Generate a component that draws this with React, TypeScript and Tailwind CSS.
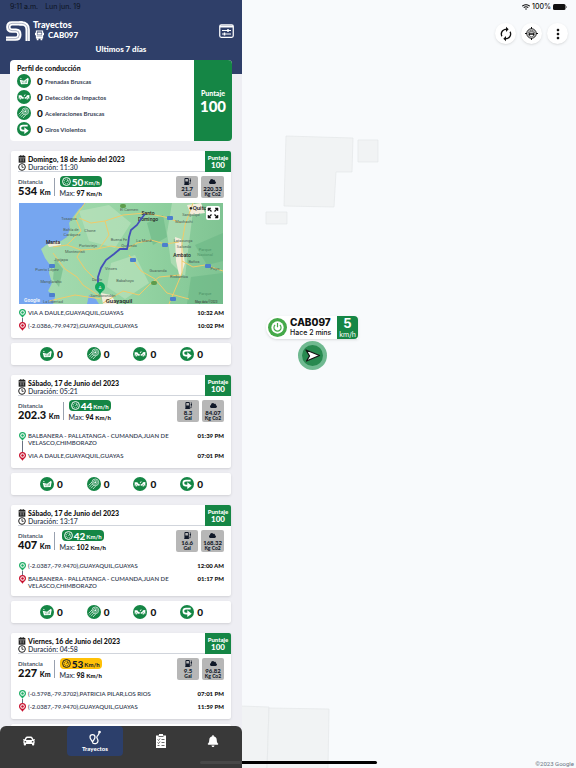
import { BsFuelPumpFill } from "react-icons/bs";
import { FaBell, FaCar, FaCloud, FaWifi } from "react-icons/fa";
import { MdAutorenew, MdMoreVert } from "react-icons/md";

type Stop = {
  place: string;
  time: string;
};

type Trip = {
  id: number;
  date: string;
  duration: string;
  distance: string;
  speed: string;
  max: string;
  warning?: boolean;
  fuel: string;
  co2: string;
  map?: boolean;
  stops: Stop[];
};

type EventKind = "brake" | "impact" | "accel" | "turn";

const trips: Trip[] = [
  {
    id: 1,
    date: "Domingo, 18 de Junio del 2023",
    duration: "11:30",
    distance: "534",
    speed: "50",
    max: "97",
    fuel: "21.7",
    co2: "220.33",
    map: true,
    stops: [
      { place: "VIA A DAULE,GUAYAQUIL,GUAYAS", time: "10:32 AM" },
      { place: "(-2.0386,-79.9472),GUAYAQUIL,GUAYAS", time: "10:02 PM" },
    ],
  },
  {
    id: 2,
    date: "Sábado, 17 de Junio del 2023",
    duration: "05:21",
    distance: "202.3",
    speed: "44",
    max: "94",
    fuel: "8.3",
    co2: "84.07",
    stops: [
      {
        place: "BALBANERA - PALLATANGA - CUMANDA,JUAN DE VELASCO,CHIMBORAZO",
        time: "01:39 PM",
      },
      { place: "VIA A DAULE,GUAYAQUIL,GUAYAS", time: "07:01 PM" },
    ],
  },
  {
    id: 3,
    date: "Sábado, 17 de Junio del 2023",
    duration: "13:17",
    distance: "407",
    speed: "42",
    max: "102",
    fuel: "16.6",
    co2: "168.32",
    stops: [
      { place: "(-2.0387,-79.9470),GUAYAQUIL,GUAYAS", time: "12:00 AM" },
      {
        place: "BALBANERA - PALLATANGA - CUMANDA,JUAN DE VELASCO,CHIMBORAZO",
        time: "01:17 PM",
      },
    ],
  },
  {
    id: 4,
    date: "Viernes, 16 de Junio del 2023",
    duration: "04:58",
    distance: "227",
    speed: "53",
    max: "98",
    warning: true,
    fuel: "9.5",
    co2: "96.82",
    stops: [
      { place: "(-0.5798,-79.3702),PATRICIA PILAR,LOS RIOS", time: "07:01 PM" },
      { place: "(-2.0387,-79.9470),GUAYAQUIL,GUAYAS", time: "11:59 PM" },
    ],
  },
];

const profile: { kind: EventKind; label: string }[] = [
  { kind: "brake", label: "Frenadas Bruscas" },
  { kind: "impact", label: "Detección de Impactos" },
  { kind: "accel", label: "Aceleraciones Bruscas" },
  { kind: "turn", label: "Giros Violentos" },
];

const counters: EventKind[] = ["brake", "accel", "impact", "turn"];

const mapLabels = [
  { x: 50, y: 17, t: "Tosagua" },
  { x: 52, y: 28, t: "Bahía de" },
  { x: 53, y: 33, t: "Caráquez" },
  { x: 71, y: 29, t: "Chone" },
  { x: 69, y: 44, t: "Portoviejo" },
  { x: 56, y: 50, t: "Montecristi" },
  { x: 42, y: 58, t: "Jipijapa" },
  { x: 28, y: 68, t: "Puerto López" },
  { x: 32, y: 80, t: "Manglaralto" },
  { x: 34, y: 100, t: "La Libertad" },
  { x: 110, y: 8, t: "El Carmen" },
  { x: 172, y: 13, t: "Sangolquí" },
  { x: 165, y: 20, t: "Machachi" },
  { x: 164, y: 39, t: "Latacunga" },
  { x: 165, y: 45, t: "Salcedo" },
  { x: 125, y: 39, t: "La Maná" },
  { x: 100, y: 38, t: "Buena Fe" },
  { x: 110, y: 44, t: "Quevedo" },
  { x: 92, y: 67, t: "Vinces" },
  { x: 106, y: 79, t: "Babahoyo" },
  { x: 139, y: 69, t: "Guaranda" },
  { x: 160, y: 75, t: "Riobamba" },
  { x: 175, y: 60, t: "Baños" },
  { x: 196, y: 67, t: "Puyo" },
  { x: 78, y: 78, t: "Daule" },
  { x: 84, y: 94, t: "Samborondón" },
];

function EventIcon({ kind }: { kind: EventKind }) {
  return (
    <svg viewBox="0 0 42 42" className="size-3.5 shrink-0" aria-hidden="true">
      <circle cx="21" cy="21" r="21" fill="#158645" />

      {kind === "brake" && (
        <g fill="#fff">
          <path d="M8 17 L21 20 L33 11 L35 15 L32 30 L12 31 Z" />
          <path d="M9 13 L14 14" stroke="#fff" strokeWidth="2" />
          <path
            d="M15 22 L17 28 M20 22 L21 28 M25 20 L25 28 M29 18 L28 27"
            stroke="#158645"
            strokeWidth="1.4"
          />
        </g>
      )}

      {kind === "impact" && (
        <g fill="#fff">
          <path d="M5 16 L13 16 L16 20 L20 21 L20 26 L5 26 Z" />
          <path d="M23 26 L23 22 L27 21 L30 16 L37 15 L37 26 Z" />
          <path d="M20 18 L22 19 L26 14 L24 13 Z" />
          <g stroke="#158645" strokeWidth="1.4">
            <circle cx="10" cy="26" r="3" />
            <circle cx="31" cy="26" r="3" />
          </g>
        </g>
      )}

      {kind === "accel" && (
        <g fill="none" stroke="#fff" strokeWidth="2">
          <circle cx="25" cy="16" r="10" />
          <circle cx="25" cy="16" r="6" strokeWidth="1.6" />
          <circle cx="25" cy="16" r="2" fill="#fff" />
          <path d="M15 15 L5 25 M16 21 L7 31 M20 25 L12 34 M27 26 L18 36" />
        </g>
      )}

      {kind === "turn" && (
        <g fill="none" stroke="#fff" strokeWidth="5">
          <path d="M32 11 H18 Q10 11 10 18 Q10 26 18 26 H24" />
          <path d="M22 16 L35 26 L22 36 Z" fill="#fff" stroke="none" />
        </g>
      )}
    </svg>
  );
}

function Pin({ end }: { end?: boolean }) {
  return (
    <svg viewBox="0 0 14 18" className="h-[9px] w-[7px] shrink-0" aria-hidden="true">
      <path
        d="M7 18 C6 14 0 12 0 7 A7 7 0 0 1 14 7 C14 12 8 14 7 18 Z"
        fill={end ? "#c8102e" : "#1fae66"}
      />
      <circle cx="7" cy="7" r="4.500" fill="#fff" />
      <circle cx="7" cy="7" r="2.500" fill={end ? "#c8102e" : "#1fae66"} />
    </svg>
  );
}

function CalendarIcon() {
  return (
    <svg viewBox="0 0 24 24" className="size-2 shrink-0" aria-hidden="true">
      <path d="M2 3h20v20H2z" fill="#222" />
      <path d="M7 0v6M12 0v6M17 0v6" stroke="#222" strokeWidth="2.500" />
      <path d="M3 8.500h18" stroke="#fff" strokeWidth="1.500" />
      <path
        d="M6 12.500h12M6 17.500h12"
        stroke="#fff"
        strokeWidth="2"
        strokeDasharray="2.500 2"
      />
    </svg>
  );
}

function ClockIcon() {
  return (
    <svg viewBox="0 0 24 24" className="size-2 shrink-0" aria-hidden="true">
      <circle cx="12" cy="12" r="10" fill="none" stroke="#222" strokeWidth="3" />
      <path d="M12 6v7h5" fill="none" stroke="#222" strokeWidth="2.500" />
    </svg>
  );
}

function SpeedIcon() {
  return (
    <svg viewBox="0 0 24 24" className="size-[9px] shrink-0" aria-hidden="true">
      <g fill="none" stroke="currentColor">
        <circle cx="12" cy="12" r="10.500" strokeWidth="2.500" />
        <circle cx="12" cy="12" r="6" strokeWidth="1.500" strokeDasharray="3 1.500" />
        <path d="M12 13l4-5" strokeWidth="2" />
      </g>
    </svg>
  );
}

function Logo() {
  return (
    <svg viewBox="0 0 72 60" className="h-5 w-6 shrink-0" aria-hidden="true">
      <g fill="none" stroke="#fff" strokeWidth="13">
        <path d="M50 7 H18 Q7 7 7 18 Q7 29 18 29 H30 Q40 29 40 41 Q40 53 28 53 H0" />
        <path d="M40 7 H46 Q65 7 65 26 V60" />
      </g>
      <g fill="none" stroke="#2f3f69" strokeWidth="1.200">
        <path d="M46 7 H18 Q7 7 7 18 Q7 29 18 29 H30 Q40 29 40 41 Q40 53 28 53 H0" />
        <path d="M46 7 Q65 8 65 26 V60" />
      </g>
    </svg>
  );
}

function RouteMap() {
  return (
    <div className="relative mt-[3px]">
      <svg viewBox="0 0 204 101" className="block w-full" fontFamily="Roboto, sans-serif">
        <defs>
          <linearGradient id="land" x1="0" x2="1" y1="0" y2="0">
            <stop offset="0" stopColor="#a9dcb3" />
            <stop offset="0.600" stopColor="#93d3a2" />
            <stop offset="1" stopColor="#80c493" />
          </linearGradient>
        </defs>
        <rect width="204" height="101" fill="url(#land)" />

        {/* terrain */}
        <g fill="#bfe4c0" opacity="0.600">
          <path d="M60 8 L90 2 L112 20 L96 45 L70 38 Z" />
          <path d="M92 60 L116 52 L130 80 L106 96 L88 84 Z" />
          <path d="M153 0 L175 0 L170 40 L166 74 L152 60 L148 30 Z" />
        </g>
        <g fill="#6cb886" opacity="0.600">
          <path d="M176 42 L204 30 L204 58 L188 62 Z" />
          <path d="M172 74 L204 70 L204 101 L168 101 Z" />
          <path d="M128 20 L144 12 L148 34 L134 42 Z" />
          <path d="M36 56 L44 66 L40 84 L34 76 Z" />
        </g>
        <g fill="#f3eddc">
          <path d="M156 34 L162 36 L166 60 L161 76 L157 58 Z" />
          <path d="M28 40 L40 36 L42 42 L30 44 Z" />
          <path d="M82 90 L92 92 L98 101 L84 101 Z" />
          <path d="M168 2 L182 0 L186 10 L172 12 Z" />
        </g>

        {/* ocean */}
        <path
          d="M0 0 H67 L60 6 L54 14 L50 20 L51 26 L48 34 L42 38 L34 39 L27 42 L22 46 L26 55 L31 62 L30 70 L33 80 L29 88 L36 94 L34 101 H0 Z"
          fill="#76a6f0"
        />
        <path d="M68 101 L70 92 L76 95 L80 101 Z" fill="#76a6f0" />

        {/* roads */}
        <g fill="none" stroke="#f0cb6a" strokeWidth="1">
          <path d="M66 0 L56 14 L62 28 L48 42 L34 44" />
          <path d="M48 42 L62 47 L78 46 L92 43 L108 46 L118 40 L132 37 L146 41 L160 39" />
          <path d="M34 50 L46 66 L58 74 L64 82 L82 94" />
          <path d="M60 15 L72 20 L86 18 L104 12 L126 10 L146 14 L162 20" />
          <path d="M174 0 L166 22 L163 40 L163 70 L150 101" />
          <path d="M84 100 L104 88 L120 92 L130 82 L140 74 L161 72" />
          <path d="M110 52 L122 68 L136 76 L148 90 L170 96" />
          <path d="M30 98 L56 92 L82 96" />
          <path d="M163 58 L174 64 L186 62 L204 68" />
          <path d="M82 82 L66 66 L58 54 L62 47" />
          <path d="M86 18 L90 32 L80 46" />
        </g>

        {/* highway shields */}
        <g fill="#4c7fcd">
          {[
            [148, 13],
            [143, 40],
            [111, 55],
            [186, 61],
            [151, 94],
            [30, 61],
            [30, 90],
          ].map(([x, y]) => (
            <rect key={`${x}-${y}`} x={x} y={y} width="6" height="4" rx="1" />
          ))}
        </g>
        <g fill="#5d9c4c">
          <rect x="101" y="1" width="6" height="4" rx="2" />
          <rect x="132" y="78" width="6" height="4" rx="2" />
        </g>

        <g fontSize="4" fill="#4b5f57" textAnchor="middle">
          {mapLabels.map((label) => (
            <text key={label.t} x={label.x} y={label.y}>
              {label.t}
            </text>
          ))}
          <text x="186" y="48" fill="#4d9468">Parque</text>
          <text x="186" y="53" fill="#4d9468">Nacional</text>
          <text x="186" y="92" fill="#4d9468">Parque</text>
        </g>
        <g fontSize="5" fontWeight="500" fill="#222" textAnchor="middle">
          <text x="34" y="41">Manta</text>
          <text x="129" y="12">Santo</text>
          <text x="129" y="18">Domingo</text>
          <text x="163" y="54">Ambato</text>
          <text x="179" y="7" fontSize="6">●Quito</text>
          <text x="100" y="100" fontSize="6">Guayaquil</text>
        </g>
        <text x="5" y="99" fontSize="5" fontWeight="700" fill="#eef3fb">Google</text>
        <text x="176" y="100" fontSize="3" fill="#333">Map data ©2023</text>

        {/* travelled route */}
        <path
          d="M126 11 L122 16 L118 22 L112 27 L110 34 L109 42 L108 46 L101 46 L95 51 L87 57 L82 65 L79 74 L79 82 L81 90"
          fill="none"
          stroke="#4450b8"
          strokeWidth="1.800"
        />
        <path d="M81 92 C80 88 76 88 76 84 A5 5 0 0 1 86 84 C86 88 82 88 81 92 Z" fill="#12a85f" />
        <text x="81" y="86" fontSize="4" fill="#fff" textAnchor="middle">A</text>
      </svg>

      <button
        aria-label="Ampliar mapa"
        className="absolute top-[3px] right-[3px] flex size-3.5 items-center justify-center rounded-xs bg-white"
      >
        <svg viewBox="0 0 24 24" className="size-3" aria-hidden="true">
          <g fill="#111" stroke="#111" strokeWidth="2.500">
            <path d="M2 2h6l-6 6zM22 2v6l-6-6zM2 22v-6l6 6zM22 22h-6l6-6z" strokeWidth="1" />
            <path d="M4 4l5 5M20 4l-5 5M4 20l5-5M20 20l-5-5" />
          </g>
        </svg>
      </button>
    </div>
  );
}

function CounterBar() {
  return (
    <div className="mt-[5px] flex h-[22px] items-center justify-between rounded-xs bg-white pr-7 pl-[29px] shadow">
      {counters.map((kind) => (
        <div key={kind} className="flex items-center gap-[3px]">
          <EventIcon kind={kind} />
          <span className="text-[10px] leading-none font-black">0</span>
        </div>
      ))}
    </div>
  );
}

function TripCard({ trip }: { trip: Trip }) {
  return (
    <section className="mb-2.5">
      <div className="rounded-xs bg-white pb-[7px] shadow">

        {/* TOP */}
        <div className="flex h-[21px]">
          <div className="ml-[7px] flex flex-1 flex-col justify-end border-b border-gray-300">
            <h2 className="flex items-center gap-0.5 text-[7px] leading-2 font-black">
              <CalendarIcon />
              {trip.date}
            </h2>
            <p className="flex items-center gap-0.5 text-[7px] leading-2 font-semibold text-gray-700">
              <ClockIcon />
              Duración: {trip.duration}
            </p>
          </div>
          <div className="flex w-[26px] flex-col items-center justify-center rounded-tr-xs bg-[#158645] font-black text-white">
            <span className="text-[6px] leading-[7px]">Puntaje</span>
            <span className="text-[8px] leading-[9px]">100</span>
          </div>
        </div>

        {/* METRICS */}
        <div className="flex h-7 items-start pt-1 pr-[7px] pl-[7px]">
          <div className="pt-0.5">
            <p className="text-[6px] leading-[7px] font-bold text-gray-600">Distancia</p>
            <p className="text-[11px] leading-3 font-black">
              {trip.distance} <span className="text-[7px]">Km</span>
            </p>
          </div>
          <div className="mt-0.5 ml-[3px] h-[18px] w-px bg-gray-400" />
          <div className="ml-[5px] flex flex-col items-center">
            <div
              className={`flex h-[11px] items-center gap-px rounded px-0.5 ${
                trip.warning ? "bg-[#ffc107] text-gray-900" : "bg-[#158645] text-white"
              }`}
            >
              <SpeedIcon />
              <span className="text-[10px] leading-none font-black">{trip.speed}</span>
              <span className="self-end text-[6px] leading-2 font-bold">Km/h</span>
            </div>
            <p className="mt-0.5 text-[7px] leading-2 font-black">
              <span className="font-semibold text-gray-700">Max:</span> {trip.max}{" "}
              <span className="text-[6px]">Km/h</span>
            </p>
          </div>

          <div className="ml-auto flex gap-[3px] text-center text-[6px] leading-[7px] font-black text-gray-900">
            <div className="flex h-[22px] min-w-[22px] flex-col items-center rounded-xs bg-[#b7b7b7] px-1 pt-0.5">
              <BsFuelPumpFill className="size-[7px]" />
              <span>{trip.fuel}</span>
              <span className="text-[5px] leading-[5px]">Gal</span>
            </div>
            <div className="flex h-[22px] min-w-[22px] flex-col items-center rounded-xs bg-[#b7b7b7] px-0.5 pt-0.5">
              <FaCloud className="size-[7px]" />
              <span>{trip.co2}</span>
              <span className="text-[5px] leading-[5px]">Kg Co2</span>
            </div>
          </div>
        </div>

        {/* ROUTE */}
        <div className="px-2">
          {trip.map && <RouteMap />}
        </div>
        <ul className={`pr-[7px] pl-2 ${trip.map ? "pt-[5px]" : "pt-2"}`}>
          {trip.stops.map((stop, i) => (
            <li key={stop.time} className="flex gap-0.5">
              <div className="flex flex-col items-center">
                <Pin end={i === 1} />
                {i === 0 && <div className="w-px flex-1 bg-gray-500" />}
              </div>
              <p
                className={`max-w-[150px] flex-1 text-[6px] leading-[7px] font-semibold text-gray-700 ${
                  i === 0 ? "pb-1.5" : ""
                }`}
              >
                {stop.place}
              </p>
              <time className="ml-auto text-[6px] leading-[7px] font-black">{stop.time}</time>
            </li>
          ))}
        </ul>
      </div>

      <CounterBar />
    </section>
  );
}

function BottomNav() {
  return (
    <nav className="relative grid h-[42px] shrink-0 grid-cols-[58fr_74fr_58fr_46fr] items-start rounded-t-md bg-[#393939] pr-1.5 text-white">
      <button aria-label="Vehículos" className="flex h-[30px] items-center justify-center">
        <FaCar className="size-3" />
      </button>
      <button className="mx-[9px] flex h-[30px] flex-col items-center justify-center rounded bg-[#2c3f6b]">
        <svg viewBox="0 0 24 30" className="h-[15px] w-3" aria-hidden="true">
          <g fill="none" stroke="#fff" strokeWidth="2.500">
            <path d="M7 24 C5 20 2 18 2 14 A5 5 0 0 1 12 14 C12 18 9 20 7 24 Z" />
            <path d="M7 25c3 4 11 3 11-3 0-5-4-6-2-9 1-2 4-3 4-7" />
            <circle cx="21" cy="4" r="1.500" />
          </g>
        </svg>
        <span className="text-[6px] leading-[7px] font-black">Trayectos</span>
      </button>
      <button aria-label="Reportes" className="flex h-[30px] items-center justify-center">
        <svg viewBox="0 0 24 28" className="h-3.5 w-3" aria-hidden="true">
          <path d="M2 3h6V0h8v3h6v25H2z" fill="#fff" />
          <g fill="none" stroke="#393939" strokeWidth="1.500">
            <path d="M7 5h10" />
            <path d="M5 11l2 2 3-4M13 11h6M5 17l2 2 3-4M13 17h6M5 23h4M13 23h6" />
          </g>
        </svg>
      </button>
      <button aria-label="Notificaciones" className="flex h-[30px] items-center justify-center">
        <FaBell className="size-3" />
      </button>

      <div className="absolute right-0 bottom-1 h-[3px] w-[42px] rounded-l-full bg-[#484848]" />
    </nav>
  );
}

function Sidebar() {
  return (
    <aside className="flex w-[242px] shrink-0 flex-col bg-[#eeeef3] text-[#111]">

      {/* HEADER */}
      <header className="bg-[#2f3f69] px-1.5 pb-5 text-white">
        <div className="flex h-3.5 gap-[7px] pl-1 font-[family-name:Inter,sans-serif] text-[7px] leading-[14px] text-[#0d1220]">
          <span>9:11 a.m.</span>
          <span>Lun jun. 19</span>
        </div>
        <div className="mt-1.5 flex items-center">
          <Logo />
          <div className="ml-[3px]">
            <h1 className="text-[9px] leading-[10px] font-black">Trayectos</h1>
            <p className="flex items-center gap-1 pl-0.5 text-[8px] leading-[11px] font-black">
              <svg viewBox="0 0 24 32" className="h-[11px] w-[9px]" aria-hidden="true">
                <path
                  d="M3 3h18v20H3zM0 8v7M24 8v7M3 15h18"
                  fill="none"
                  stroke="#fff"
                  strokeWidth="3"
                />
                <path d="M6 7h12v6H6zM3 18h18v6H3zM4 25h5v5H4zM15 25h5v5h-5z" fill="#fff" />
              </svg>
              CAB097
            </p>
          </div>
          <button aria-label="Filtros" className="mr-0.5 ml-auto">
            <svg viewBox="0 0 30 28" className="h-3.5 w-[15px]" aria-hidden="true">
              <g fill="none" stroke="#fff" strokeWidth="2.500">
                <rect x="1.500" y="1.500" width="27" height="25" rx="3" />
                <path d="M2 5h26" strokeWidth="4" />
                <path d="M6 13h18M6 20h18" strokeWidth="2" />
                <path d="M18 10v6M11 17v6" strokeWidth="3" />
              </g>
            </svg>
          </button>
        </div>
        <p className="mt-[3px] text-center text-[8px] leading-[10px] font-black">
          Ultimos 7 días
        </p>
      </header>

      {/* TRIPS */}
      <main className="-mt-3.5 min-h-0 flex-1 overflow-hidden pr-[11px] pl-[11px]">
        <section className="-mx-px mb-2.5 flex h-[81px] overflow-hidden rounded bg-white">
          <div className="flex-1 pt-1 pl-[7px]">
            <h2 className="mb-px text-[7px] leading-2 font-black">Perfil de conducción</h2>
            <ul>
              {profile.map((item) => (
                <li key={item.kind} className="flex h-4 items-center">
                  <EventIcon kind={item.kind} />
                  <span className="ml-1.5 w-2 text-[10px] leading-none font-black">0</span>
                  <span className="text-[6px] font-bold text-gray-700">{item.label}</span>
                </li>
              ))}
            </ul>
          </div>
          <div className="flex w-[38px] flex-col items-center justify-center bg-[#158645] font-black text-white">
            <span className="text-[7px] leading-[10px]">Puntaje</span>
            <span className="text-[15px] leading-4">100</span>
          </div>
        </section>

        {trips.map((trip) => (
          <TripCard key={trip.id} trip={trip} />
        ))}
      </main>

      <BottomNav />
    </aside>
  );
}

function VehicleMap() {
  return (
    <div className="relative flex-1 overflow-hidden bg-[#f8fafc] font-[family-name:Inter,sans-serif]">

      {/* BUILDINGS */}
      <svg
        viewBox="0 0 334 768"
        className="absolute top-0 left-0 h-[768px] w-[334px]"
        aria-hidden="true"
      >
        <g fill="#f1f3f4" stroke="#e4e6e8" strokeWidth="0.700">
          <path d="M44 136 L111 138 L110 172 L94 172 L92 207 L42 206 Z" />
          <path d="M116 140 H136 V162 H116 Z" />
          <path d="M24 212 H45 V224 H24 Z" />
          <path d="M-2 706 L27 707 L25 770 H-2 Z" />
          <path d="M27 708 L87 709 L86 770 H25 Z" />
        </g>
      </svg>

      {/* VEHICLE */}
      <div className="absolute top-[316px] left-6 flex flex-col items-center">
        <div className="flex h-[23px] items-stretch rounded-l-full rounded-r bg-white shadow-sm">
          <svg viewBox="0 0 40 40" className="m-0.5 size-[19px] shrink-0" aria-hidden="true">
            <circle cx="20" cy="20" r="20" fill="#45a949" />
            <circle cx="20" cy="20" r="13" fill="#fff" />
            <g fill="none" stroke="#45a949" strokeWidth="2.500">
              <path d="M15 14.500a7.500 7.500 0 1 0 10 0" />
              <path d="M20 10.500v9" />
            </g>
          </svg>
          <div className="w-12 pl-px whitespace-nowrap text-[#111]">
            <p className="pt-px text-[10px] leading-[11px] font-extrabold">CAB097</p>
            <p className="text-[7px] leading-[9px] font-medium">Hace 2 mins</p>
          </div>
          <div className="flex w-[21px] flex-col items-center rounded-r bg-[#158645] text-white">
            <span className="text-[13px] leading-[15px] font-bold">5</span>
            <span className="text-[7px] leading-[7px]">km/h</span>
          </div>
        </div>
        <svg viewBox="0 0 58 58" className="mt-0.5 size-[29px]" aria-hidden="true">
          <circle cx="29" cy="29" r="29" fill="#6fb990" />
          <circle cx="29" cy="29" r="21" fill="#27894f" />
          <path
            d="M16 18 L43 29 L17 40 L23 30 Z"
            fill="#fff"
            stroke="#111"
            strokeWidth="2.500"
            strokeLinejoin="round"
          />
        </svg>
      </div>

      {/* STATUS AND ACTIONS */}
      <div className="relative flex h-3.5 items-center justify-end gap-0.5 pr-[9px] text-[7px] font-medium text-[#111]">
        <FaWifi className="size-2" />
        <span>100%</span>
        <svg viewBox="0 0 28 12" className="h-1.5 w-3.5" aria-hidden="true">
          <rect width="25" height="12" rx="3" fill="#111" />
          <rect x="26" y="4" width="2" height="4" rx="1" fill="#888" />
        </svg>
      </div>
      <div className="relative mt-[9px] flex justify-end gap-[5px] pr-2 text-[#111]">
        <button
          aria-label="Actualizar"
          className="flex size-[21px] items-center justify-center rounded-full bg-white shadow"
        >
          <MdAutorenew className="size-4" />
        </button>
        <button
          aria-label="Centrar vehículo"
          className="flex size-[21px] items-center justify-center rounded-full bg-white shadow"
        >
          <svg viewBox="0 0 26 26" className="size-[13px]" aria-hidden="true">
            <g fill="none" stroke="#111" strokeWidth="2">
              <circle cx="13" cy="13" r="9.500" />
              <path d="M13 0v4M13 22v4M0 13h4M22 13h4" />
              <circle cx="13" cy="13" r="6.500" strokeWidth="1.200" />
            </g>
            <path d="M8 17v-4l2-4h6l2 4v4h-2v-1.500h-6V17z" fill="#111" />
            <path d="M10.500 10.500h5l1 2h-7z" fill="#fff" />
          </svg>
        </button>
        <button
          aria-label="Más opciones"
          className="flex size-[21px] items-center justify-center rounded-full bg-white shadow"
        >
          <MdMoreVert className="size-4" />
        </button>
      </div>

      <div className="absolute bottom-1 left-0 h-[3px] w-[135px] rounded-r-full bg-black" />
      <p className="absolute right-0.5 bottom-0 font-[family-name:Roboto,sans-serif] text-[6px] leading-2 text-gray-500">
        ©2023 Google
      </p>
    </div>
  );
}

export default function App() {
  return (
    <div className="flex h-screen overflow-hidden font-[family-name:Lato,sans-serif]">
      <Sidebar />
      <VehicleMap />
    </div>
  );
}
